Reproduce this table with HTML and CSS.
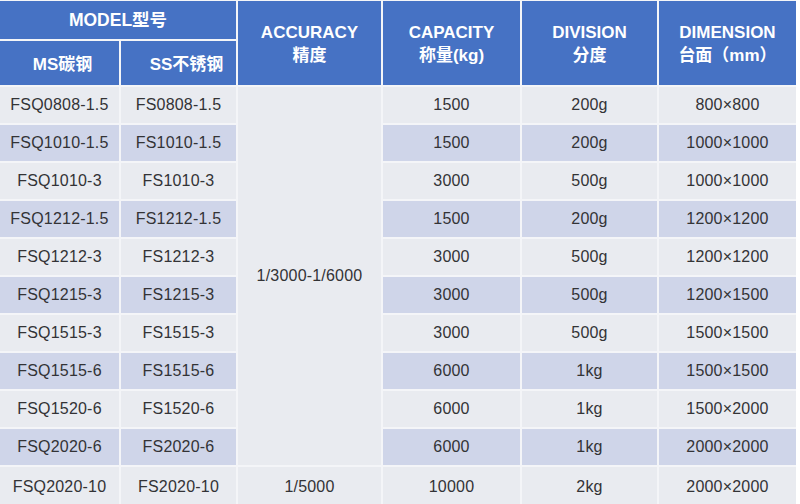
FILE: index.html
```html
<!DOCTYPE html>
<html lang="zh">
<head>
<meta charset="utf-8">
<title>Model table</title>
<link rel="stylesheet" href="styles.css">
</head>
<body>
<div class="table">
  <div class="th model">MODEL型号</div>
  <div class="th tall c3">ACCURACY<br>精度</div>
  <div class="th tall c4">CAPACITY<br>称量(kg)</div>
  <div class="th tall c5">DIVISION<br>分度</div>
  <div class="th tall c6">DIMENSION<br>台面（mm）</div>
  <div class="th sub c1">MS碳钢</div>
  <div class="th sub c2 ss">SS不锈钢</div>

  <div class="td a">FSQ0808-1.5</div><div class="td a">FS0808-1.5</div>
  <div class="td acc">1/3000-1/6000</div>
  <div class="td a">1500</div><div class="td a">200g</div><div class="td a">800×800</div>

  <div class="td b">FSQ1010-1.5</div><div class="td b">FS1010-1.5</div>
  <div class="td b">1500</div><div class="td b">200g</div><div class="td b">1000×1000</div>

  <div class="td a">FSQ1010-3</div><div class="td a">FS1010-3</div>
  <div class="td a">3000</div><div class="td a">500g</div><div class="td a">1000×1000</div>

  <div class="td b">FSQ1212-1.5</div><div class="td b">FS1212-1.5</div>
  <div class="td b">1500</div><div class="td b">200g</div><div class="td b">1200×1200</div>

  <div class="td a">FSQ1212-3</div><div class="td a">FS1212-3</div>
  <div class="td a">3000</div><div class="td a">500g</div><div class="td a">1200×1200</div>

  <div class="td b">FSQ1215-3</div><div class="td b">FS1215-3</div>
  <div class="td b">3000</div><div class="td b">500g</div><div class="td b">1200×1500</div>

  <div class="td a">FSQ1515-3</div><div class="td a">FS1515-3</div>
  <div class="td a">3000</div><div class="td a">500g</div><div class="td a">1500×1500</div>

  <div class="td b">FSQ1515-6</div><div class="td b">FS1515-6</div>
  <div class="td b">6000</div><div class="td b">1kg</div><div class="td b">1500×1500</div>

  <div class="td a">FSQ1520-6</div><div class="td a">FS1520-6</div>
  <div class="td a">6000</div><div class="td a">1kg</div><div class="td a">1500×2000</div>

  <div class="td b">FSQ2020-6</div><div class="td b">FS2020-6</div>
  <div class="td b">6000</div><div class="td b">1kg</div><div class="td b">2000×2000</div>

  <div class="td a">FSQ2020-10</div><div class="td a">FS2020-10</div>
  <div class="td a">1/5000</div>
  <div class="td a">10000</div><div class="td a">2kg</div><div class="td a">2000×2000</div>
</div>
</body>
</html>
```

FILE: styles.css
```css
html, body {
  margin: 0;
  padding: 0;
  background: #ffffff;
}

.table {
  display: grid;
  width: 796px;
  grid-template-columns: 119px 115px 143px 137px 135px 137px;
  grid-template-rows: 38px 44px repeat(10, 36px) 39px;
  gap: 2px;
  padding-top: 1px;
  background: #f4f5f8;
  font-family: "Liberation Sans", "Noto Sans CJK SC", sans-serif;
}

.th {
  background: #4672c4;
  color: #ffffff;
  font-weight: bold;
  font-size: 17px;
  line-height: 23px;
  display: flex;
  align-items: center;
  justify-content: center;
  text-align: center;
}

.model {
  grid-column: 1 / 3;
  grid-row: 1;
  font-size: 17.5px;
}

.tall {
  grid-row: 1 / 3;
  padding-top: 1px;
}

.c1 { grid-column: 1; }
.c2 { grid-column: 2; }
.c3 { grid-column: 3; }
.c4 { grid-column: 4; }
.c5 { grid-column: 5; }
.c6 { grid-column: 6; }

.sub {
  grid-row: 2;
  padding-top: 2px;
}

.c1.sub {
  padding-left: 6px;
}

.ss {
  padding-left: 16px;
}

.td {
  display: flex;
  align-items: center;
  justify-content: center;
  color: #333336;
  font-size: 16px;
  letter-spacing: 0.2px;
}

.a {
  background: #e9ebf0;
}

.b {
  background: #cfd5e9;
}

.acc {
  grid-column: 3;
  grid-row: 3 / 13;
  background: #e9ebf0;
}
```
